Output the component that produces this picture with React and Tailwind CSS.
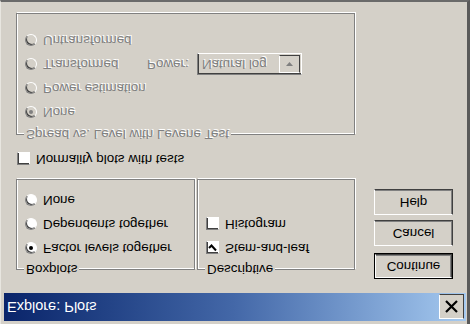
import React from "react";

const FONT = { fontFamily: '"Liberation Sans", Arial, sans-serif' };

function Radio({ checked, disabled }) {
  return (
    <span
      className={`relative flex items-center justify-center w-[12px] h-[12px] shrink-0 rounded-full border border-t-[#808080] border-l-[#808080] border-b-white border-r-white shadow-[inset_1px_1px_0_#404040] ${
        disabled ? "bg-[#d4d0c8]" : "bg-white"
      }`}
    >
      {checked && (
        <span
          className={`w-[4px] h-[4px] rounded-full ${
            disabled ? "bg-[#808080]" : "bg-black"
          }`}
        />
      )}
    </span>
  );
}

function Check({ checked }) {
  return (
    <span className="flex items-center justify-center w-[13px] h-[13px] shrink-0 bg-white border border-t-[#808080] border-l-[#808080] border-b-white border-r-white shadow-[inset_1px_1px_0_#404040]">
      {checked && (
        <svg width="9" height="9" viewBox="0 0 9 9">
          <path d="M1 4 L3.5 6.5 L8 1.5" fill="none" stroke="#000" strokeWidth="2" />
        </svg>
      )}
    </span>
  );
}

const dis = "text-[#808080] [text-shadow:1px_1px_0_#fff]";

function Group({ label, className, children, disabled }) {
  return (
    <div
      className={`flex flex-col border border-[#808080] shadow-[1px_1px_0_#fff,inset_1px_1px_0_#fff] ${className}`}
    >
      <span
        className={`-mt-[8px] ml-[7px] px-[2px] self-start leading-[15px] bg-[#d4d0c8] ${
          disabled ? dis : "text-black"
        }`}
      >
        {label}
      </span>
      {children}
    </div>
  );
}

function Row({ children }) {
  return <div className="flex items-center h-[24px] pl-[8px] gap-[6px]">{children}</div>;
}

function Button({ children, def, className = "" }) {
  return (
    <div
      className={`w-[79px] h-[26px] ${def ? "border border-black" : ""} ${className}`}
    >
      <div className="w-full h-full flex items-center justify-center bg-[#d4d0c8] border border-t-white border-l-white border-b-[#404040] border-r-[#404040] shadow-[inset_-1px_-1px_0_#808080] text-black">
        {children}
      </div>
    </div>
  );
}

export default function App() {
  return (
    <div
      style={FONT}
      className="w-[470px] h-[324px] overflow-hidden bg-[#d4d0c8] text-[13.4px] [transform:scaleY(-1)] border-l border-l-[#e8e6e0] border-r-[3px] border-r-[#5a5a5a] border-b-[2px] border-b-[#6a6a6a]"
    >
      <div className="flex items-center mt-[3px] ml-[3px] w-[462px] h-[28px] bg-gradient-to-r from-[#0a246a] via-[#4468a8] to-[#a6caf0]">
        <span className="pl-[3px] text-white text-[14.5px] leading-[16px]">Explore: Plots</span>
        <div className="ml-auto mr-[2px] w-[25px] h-[25px] flex items-center justify-center bg-[#d4d0c8] border border-t-white border-l-white border-b-[#404040] border-r-[#404040]">
          <svg width="15" height="15" viewBox="0 0 15 15">
            <path d="M2 2 L13 13 M13 2 L2 13" stroke="#000" strokeWidth="2.2" />
          </svg>
        </div>
      </div>

      <div className="flex">
        <div className="ml-[15px] w-[339px] flex flex-col">
          <div className="flex mt-[23px] gap-[2px]">
            <Group label="Boxplots" className="w-[179px] h-[91px]">
              <div className="mt-[2px]">
                <Row>
                  <Radio checked />
                  <span>Factor levels together</span>
                </Row>
                <Row>
                  <Radio />
                  <span>Dependents together</span>
                </Row>
                <Row>
                  <Radio />
                  <span>None</span>
                </Row>
              </div>
            </Group>
            <Group label="Descriptive" className="w-[158px] h-[91px]">
              <div className="mt-[2px]">
                <Row>
                  <Check checked />
                  <span>Stem-and-leaf</span>
                </Row>
                <Row>
                  <Check />
                  <span>Histogram</span>
                </Row>
              </div>
            </Group>
          </div>

          <div className="flex items-center h-[24px] mt-[8px] gap-[6px] ml-[1px]">
            <Check />
            <span>Normality plots with tests</span>
          </div>

          <Group
            label="Spread vs. Level with Levene Test"
            className="mt-[12px] w-[339px] h-[122px]"
            disabled
          >
            <div className="mt-[3px]">
              <Row>
                <Radio checked disabled />
                <span className={dis}>None</span>
              </Row>
              <Row>
                <Radio disabled />
                <span className={dis}>Power estimation</span>
              </Row>
              <Row>
                <Radio disabled />
                <span className={`${dis} w-[104px]`}>Transformed</span>
                <span className={`${dis} w-[44px] -ml-[6px]`}>Power:</span>
                <div className="w-[105px] h-[22px] flex items-center bg-[#d4d0c8] border border-t-[#808080] border-l-[#808080] border-b-white border-r-white shadow-[inset_1px_1px_0_#404040]">
                  <span className={`${dis} pl-[4px] flex-1`}>Natural log</span>
                  <div className="w-[21px] h-[18px] mr-[1px] flex items-center justify-center bg-[#d4d0c8] border border-t-white border-l-white border-b-[#404040] border-r-[#404040]">
                    <svg width="9" height="5" viewBox="0 0 9 5">
                      <path d="M1 0 L8 0 L4.5 4 Z" fill="#808080" />
                    </svg>
                  </div>
                </div>
              </Row>
              <Row>
                <Radio disabled />
                <span className={dis}>Untransformed</span>
              </Row>
            </div>
          </Group>
        </div>

        <div className="ml-[19px] mt-[14px] flex flex-col">
          <Button def>Continue</Button>
          <Button className="mt-[7px]">Cancel</Button>
          <Button className="mt-[5px]">Help</Button>
        </div>
      </div>
    </div>
  );
}
